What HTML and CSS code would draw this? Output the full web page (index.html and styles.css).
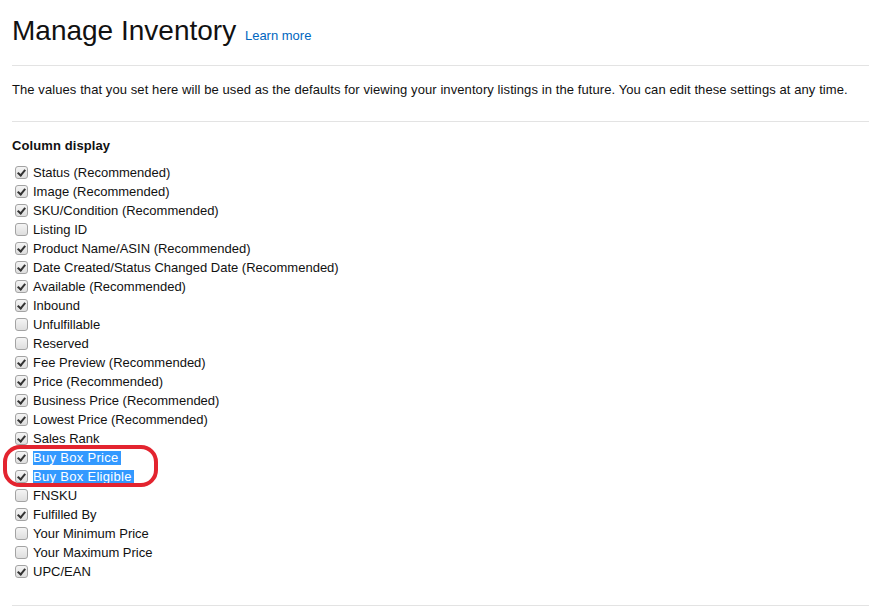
FILE: index.html
```html
<!DOCTYPE html>
<html>
<head>
<meta charset="utf-8">
<link rel="stylesheet" href="styles.css">
</head>
<body>
<div class="page">
  <h1 class="title">Manage Inventory <a class="learn" href="#">Learn more</a></h1>
  <hr class="rule">
  <p class="intro">The values that you set here will be used as the defaults for viewing your inventory listings in the future. You can edit these settings at any time.</p>
  <hr class="rule rule-b">
  <h2 class="section">Column display</h2>
  <ul class="cols">
    <li class="row"><span class="cb on"></span>Status (Recommended)</li>
    <li class="row"><span class="cb on"></span>Image (Recommended)</li>
    <li class="row"><span class="cb on"></span>SKU/Condition (Recommended)</li>
    <li class="row"><span class="cb"></span>Listing ID</li>
    <li class="row"><span class="cb on"></span>Product Name/ASIN (Recommended)</li>
    <li class="row"><span class="cb on"></span>Date Created/Status Changed Date (Recommended)</li>
    <li class="row"><span class="cb on"></span>Available (Recommended)</li>
    <li class="row"><span class="cb on"></span>Inbound</li>
    <li class="row"><span class="cb"></span>Unfulfillable</li>
    <li class="row"><span class="cb"></span>Reserved</li>
    <li class="row"><span class="cb on"></span>Fee Preview (Recommended)</li>
    <li class="row"><span class="cb on"></span>Price (Recommended)</li>
    <li class="row"><span class="cb on"></span>Business Price (Recommended)</li>
    <li class="row"><span class="cb on"></span>Lowest Price (Recommended)</li>
    <li class="row"><span class="cb on"></span>Sales Rank</li>
    <li class="group">
      <ul class="sub">
        <li class="row"><span class="cb on"></span><span class="sel">Buy Box Price</span></li>
        <li class="row"><span class="cb on"></span><span class="sel">Buy Box Eligible</span></li>
      </ul>
    </li>
    <li class="row"><span class="cb"></span>FNSKU</li>
    <li class="row"><span class="cb on"></span>Fulfilled By</li>
    <li class="row"><span class="cb"></span>Your Minimum Price</li>
    <li class="row"><span class="cb"></span>Your Maximum Price</li>
    <li class="row"><span class="cb on"></span>UPC/EAN</li>
  </ul>
  <hr class="rule rule-c">
</div>
</body>
</html>
```
FILE: styles.css
```css
html, body {
  margin: 0;
  padding: 0;
  background: #fff;
}
body {
  font-family: "Liberation Sans", Arial, sans-serif;
  color: #111;
  font-size: 13px;
}
.page {
  padding: 14px 0 0 12px;
}
.title {
  margin: 0;
  font-size: 28px;
  font-weight: normal;
  line-height: 34px;
  height: 34px;
}
.learn {
  font-size: 13px;
  color: #0066c0;
  text-decoration: none;
  margin-left: 1px;
}
.rule {
  border: 0;
  border-top: 1px solid #e3e3e3;
  margin: 17px 0 0 0;
  height: 0;
}
.intro {
  margin: 14px 0 0 0;
  line-height: 19px;
  white-space: nowrap;
  letter-spacing: 0.085px;
}
.rule-b {
  margin-top: 22px;
}
.section {
  margin: 14px 0 0 0;
  font-size: 13px;
  font-weight: bold;
  line-height: 19px;
  letter-spacing: 0.1px;
}
.cols, .sub {
  list-style: none;
  margin: 0;
  padding: 0;
}
.cols {
  margin-top: 8px;
}
.row {
  display: flex;
  align-items: center;
  height: 19px;
  line-height: 19px;
  white-space: nowrap;
}
.cb {
  display: inline-block;
  box-sizing: border-box;
  width: 13px;
  height: 13px;
  margin: 0 5px 0 3px;
  border: 1px solid #a3a3a3;
  border-radius: 3px;
  background: linear-gradient(#f4f4f4, #dedede);
  flex: none;
  position: relative;
}
.cb.on::after {
  content: "";
  position: absolute;
  left: 3px;
  top: 1px;
  width: 3px;
  height: 6px;
  border-right: 2px solid #333;
  border-bottom: 2px solid #333;
  transform: rotate(40deg);
}
.group {
  position: relative;
}
.group::before {
  content: "";
  position: absolute;
  left: -9px;
  top: -3px;
  width: 155px;
  height: 42px;
  box-sizing: border-box;
  border: 4px solid #e3242f;
  border-radius: 17px;
  pointer-events: none;
}
.sel {
  background: #3399ff;
  color: #fff;
  line-height: 14px;
  padding: 0 2px 0 0;
  letter-spacing: 0.3px;
}
.rule-c {
  margin-top: 24px;
}
```
